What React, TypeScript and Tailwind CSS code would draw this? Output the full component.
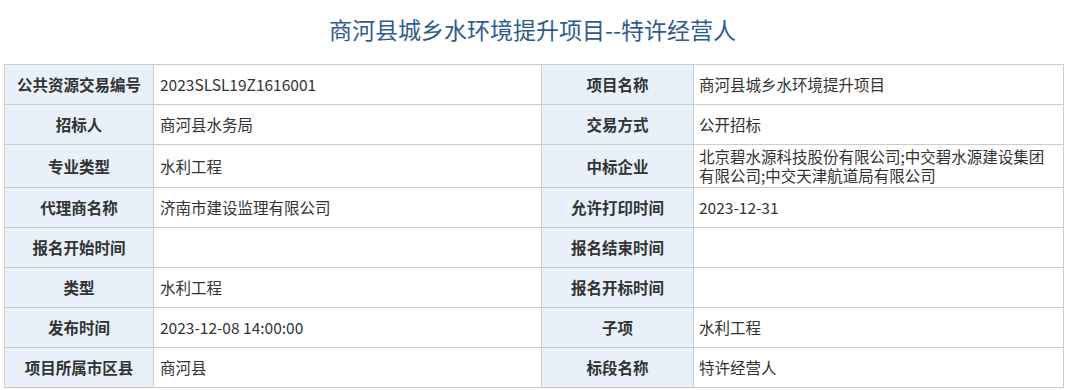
import React from "react";

const rows: [string, string, string, string][] = [
  ["公共资源交易编号", "2023SLSL19Z1616001", "项目名称", "商河县城乡水环境提升项目"],
  ["招标人", "商河县水务局", "交易方式", "公开招标"],
  ["专业类型", "水利工程", "中标企业", "北京碧水源科技股份有限公司;中交碧水源建设集团有限公司;中交天津航道局有限公司"],
  ["代理商名称", "济南市建设监理有限公司", "允许打印时间", "2023-12-31"],
  ["报名开始时间", "", "报名结束时间", ""],
  ["类型", "水利工程", "报名开标时间", ""],
  ["发布时间", "2023-12-08 14:00:00", "子项", "水利工程"],
  ["项目所属市区县", "商河县", "标段名称", "特许经营人"],
];

export default function App() {
  return (
    <div
      className="w-[1065px] h-[390px] bg-white overflow-hidden"
      style={{ fontFamily: '"Noto Sans CJK SC", "Noto Sans", sans-serif' }}
    >
      <div className="h-[64px] flex items-center justify-center text-[23px] text-[#2f5b8e] leading-none pb-[6px]">
        商河县城乡水环境提升项目--特许经营人
      </div>
      <div className="pl-[4px]">
        <table className="w-[1059px] table-fixed border-collapse text-[15.5px] leading-[19px] text-[#333]">
          <colgroup>
            <col className="w-[149px]" />
            <col className="w-[388px]" />
            <col className="w-[152px]" />
            <col className="w-[370px]" />
          </colgroup>
          <tbody>
            {rows.map((r, i) => (
              <tr key={i} className="h-[40px]">
                <td className="border border-[#cccccc] bg-[#e8f1f9] text-center font-bold py-[2px] px-[2px]">{r[0]}</td>
                <td className="border border-[#cccccc] py-[2px] pl-[6px] pr-[4px]">{r[1]}</td>
                <td className="border border-[#cccccc] bg-[#e8f1f9] text-center font-bold py-[2px] px-[2px]">{r[2]}</td>
                <td className="border border-[#cccccc] py-[2px] pl-[5px] pr-[14px]">{r[3]}</td>
              </tr>
            ))}
          </tbody>
        </table>
      </div>
    </div>
  );
}
